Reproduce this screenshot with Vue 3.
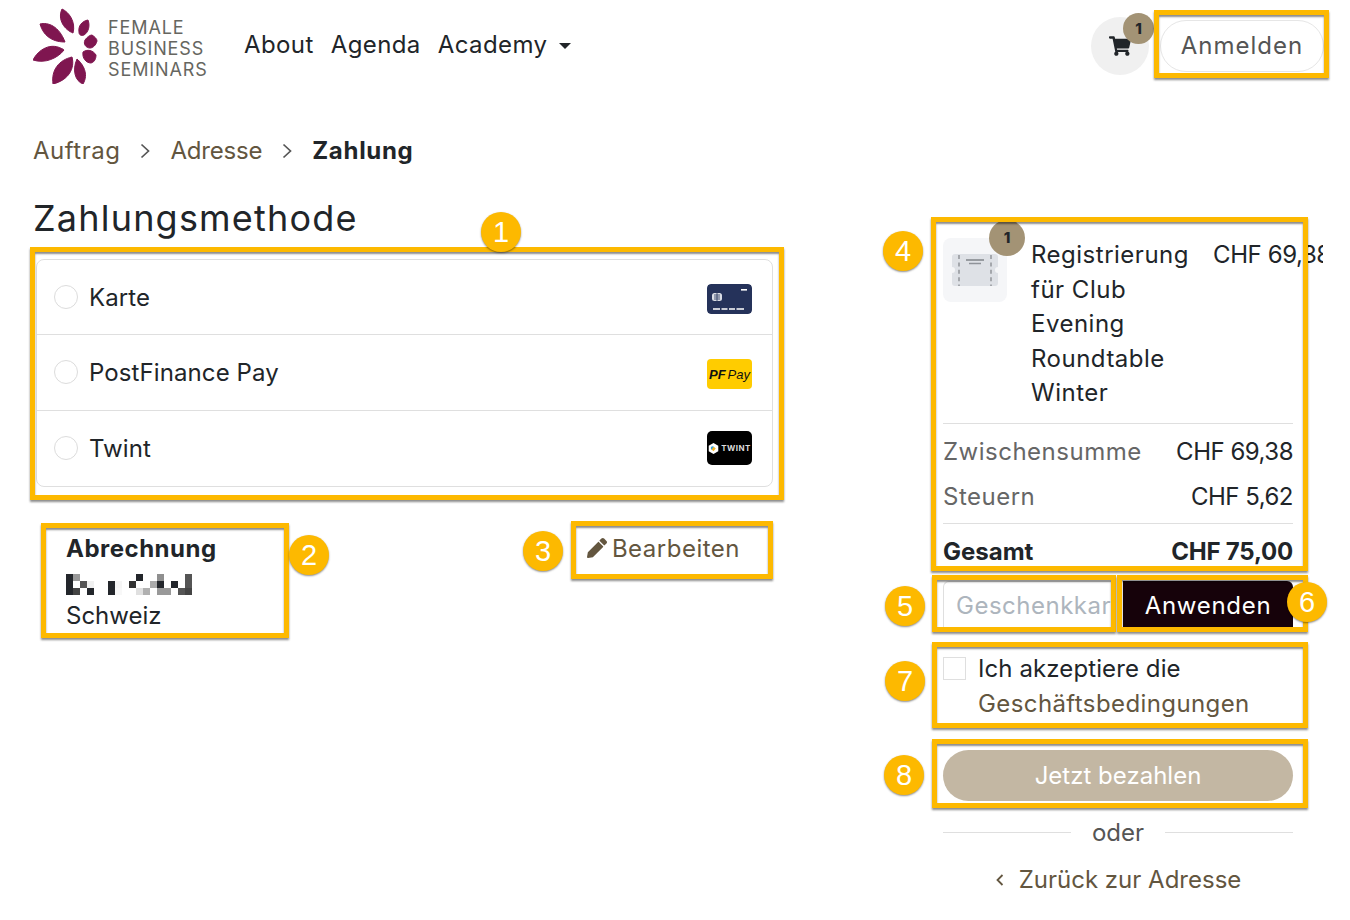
<template>
  <div class="page">
    <header class="topbar">
      <div class="brand">
        <svg class="logo" viewBox="0 0 66 76" width="66" height="76">
          <g fill="#7f1650" stroke="#7f1650" stroke-width="1" stroke-linejoin="round">
            <path v-for="p in petals" :key="p" :d="p" />
          </g>
        </svg>
        <div class="brand-name">FEMALE<br />BUSINESS<br />SEMINARS</div>
      </div>
      <nav class="nav">
        <a>About</a>
        <a>Agenda</a>
        <a class="dropdown">Academy</a>
      </nav>
      <div class="actions">
        <div class="cart">
          <svg viewBox="0 0 576 512" width="22" height="20">
            <path fill="#212529" d="M528 301l47-208c3-15-8-29-24-29H159l-9-45C148 8 138 0 126 0H24C11 0 0 11 0 24v16c0 13 11 24 24 24h70l70 343c-17 10-28 28-28 49 0 31 25 56 56 56s56-25 56-56c0-16-6-30-17-40h210c-11 10-17 24-17 40 0 31 25 56 56 56s56-25 56-56c0-22-13-41-32-50l6-24c3-15-8-29-24-29H212l-7-32h299c11 0 21-8 24-19z" />
          </svg>
          <span class="count">1</span>
        </div>
        <button class="login">Anmelden</button>
      </div>
    </header>

    <ol class="crumbs">
      <li>Auftrag</li>
      <li class="sep"><svg viewBox="0 0 10 16" width="10" height="16"><path d="M1.5 1.5L8.5 8l-7 6.500" fill="none" stroke="#555" stroke-width="1.7" /></svg></li>
      <li class="tight">Adresse</li>
      <li class="sep"><svg viewBox="0 0 10 16" width="10" height="16"><path d="M1.5 1.5L8.5 8l-7 6.500" fill="none" stroke="#555" stroke-width="1.7" /></svg></li>
      <li class="current">Zahlung</li>
    </ol>

    <main class="checkout">
      <section class="left">
        <h1>Zahlungsmethode</h1>
        <div class="methods">
          <label v-for="m in methods" :key="m.name" class="method">
            <span class="radio"></span>
            <span class="method-name">{{ m.name }}</span>
            <svg v-if="m.icon === 'card'" class="pay-icon card" viewBox="0 0 45 30">
              <rect width="45" height="30" rx="4" fill="#25325a" />
              <rect x="34" y="5" width="6" height="1.600" fill="#fff" />
              <rect x="5" y="9" width="10" height="8" rx="2.500" fill="#d9dce4" />
              <path d="M7 11h6M7 13h6M7 15h6M10 9v8" stroke="#25325a" stroke-width=".8" />
              <path d="M6 25h7M14.500 25h6M22 25h6M29.500 25h7.500" stroke="#fff" stroke-width="1.600" />
            </svg>
            <span v-else-if="m.icon === 'pf'" class="pay-icon pf"><b>PF</b><span>Pay</span></span>
            <span v-else class="twint">
              <svg viewBox="0 0 12 12" width="11" height="11">
                <path d="M6 0l5.200 3v6L6 12 .8 9V3z" fill="#fff" />
                <circle cx="5" cy="5.500" r="2" fill="#2f9fd8" />
                <path d="M6 4l2.500 2L6 9 4 7z" fill="#f5b324" />
              </svg>
              <span>TWINT</span>
            </span>
          </label>
        </div>

        <div class="billing-row">
          <div class="billing">
            <strong>Abrechnung</strong>
            <div class="blurred">
              <i v-for="(c, i) in blurCells" :key="i" :style="{ background: c }"></i>
            </div>
            <div>Schweiz</div>
          </div>
          <a class="edit">
            <svg viewBox="0 0 512 512" width="20" height="20">
              <path fill="#63563f" d="M497.900 142.100l-46.100 46.100c-4.700 4.700-12.300 4.700-17 0l-111-111c-4.700-4.700-4.700-12.300 0-17l46.100-46.100c18.700-18.700 49.100-18.700 67.900 0l60.100 60.100c18.800 18.700 18.800 49.100 0 67.900zM284.200 99.800L21.600 362.400.4 483.900c-2.900 16.400 11.400 30.600 27.800 27.800l121.500-21.300 262.600-262.600c4.700-4.700 4.700-12.300 0-17l-111-111c-4.800-4.700-12.400-4.700-17.100 0z" />
            </svg>
            Bearbeiten
          </a>
        </div>
      </section>

      <aside class="summary">
        <div class="item">
          <div class="thumb">
            <svg viewBox="0 0 64 64" width="64" height="64">
              <path fill="#dee1e6" d="M12 16h40a3 3 0 0 1 3 3v10a3 3 0 0 0 0 6v10a3 3 0 0 1-3 3H12a3 3 0 0 1-3-3V35a3 3 0 0 0 0-6V19a3 3 0 0 1 3-3z" />
              <path d="M16 17v31M48 17v31" stroke="#a4a7ac" stroke-width="2" stroke-dasharray="4 3.400" />
              <path d="M23 22h18" stroke="#7f8389" stroke-width="1.500" />
              <path d="M26 25.500h12" stroke="#8f9399" stroke-width="1.500" />
            </svg>
            <span class="count">1</span>
          </div>
          <div class="item-name">Registrierung für Club Evening Roundtable Winter</div>
          <div class="item-price">CHF 69,38</div>
        </div>

        <div class="totals">
          <div class="total-line"><span class="muted">Zwischensumme</span><span class="amount">CHF 69,38</span></div>
          <div class="total-line"><span class="muted">Steuern</span><span class="amount">CHF 5,62</span></div>
        </div>
        <div class="grand"><span>Gesamt</span><span class="amount-bold">CHF 75,00</span></div>

        <div class="gift">
          <input type="text" placeholder="Geschenkkarte" />
          <button>Anwenden</button>
        </div>

        <label class="terms">
          <span class="check"></span>
          <span>Ich akzeptiere die <a>Geschäftsbedingungen</a></span>
        </label>

        <button class="pay">Jetzt bezahlen</button>

        <div class="or"><span>oder</span></div>

        <a class="back">
          <svg viewBox="0 0 10 16" width="10" height="16"><path d="M7.500 3L2.500 8l5 5" fill="none" stroke="#63563f" stroke-width="1.800" /></svg>
          Zurück zur Adresse
        </a>
      </aside>
    </main>

    <!-- annotations drawn over the screenshot -->
    <div v-for="(b, i) in boxes" :key="'b' + i" class="mark" :style="boxStyle(b)"></div>
    <div v-for="c in callouts" :key="c.n" class="callout" :style="{ left: c.x - 20 + 'px', top: c.y - 20 + 'px' }">{{ c.n }}</div>
  </div>
</template>

<script setup>
const petals = [
  'M29 1C36 4 43 14 40 25C32 22 24 12 29 1Z',
  'M7 16C15 14 26 18 32 34C22 34 11 30 7 16Z',
  'M0 52C5 42 18 33 31 42C25 50 12 56 0 52Z',
  'M20 76C18 62 26 52 39 49C42 60 36 72 20 76Z',
  'M50 76C42 73 39 62 44 51C50 56 56 66 50 76Z',
  'M50 44C54 41 60 42 63 47C63 50 62 54 58 55C53 55 49 50 50 44Z',
  'M52 32C54 29 57 27 59 27C62 29 64 31 64 33C63 37 60 40 57 40C53 40 50 36 52 32Z',
  'M46 24C45 18 49 13 55 12C57 17 56 24 51 27C48 28 46 27 46 24Z',
]

const methods = [
  { name: 'Karte', icon: 'card' },
  { name: 'PostFinance Pay', icon: 'pf' },
  { name: 'Twint', icon: 'twint' },
]

const d = '#23262b'
const w = '#ffffff'
const blurCells = [
  d, '#999', w, w, w, w, w, w, w, w, d, w, w, '#8f8f8f', w, w, w, '#555',
  d, w, '#555', '#f0f0f0', w, w, d, '#f5f5f5', w, '#333', w, w, '#aaa', d, w, d, w, '#555',
  d, '#444', w, d, w, w, d, '#f8f8f8', w, w, '#e0e0e0', '#b0b0b0', w, '#999', '#999', w, '#555', '#444',
]

const boxes = [
  [30, 247, 754, 253],
  [41, 523, 248, 115],
  [571, 521, 202, 58],
  [931, 217, 377, 354],
  [932, 575, 184, 57],
  [1117, 575, 191, 57],
  [932, 642, 376, 86],
  [932, 739, 376, 69],
  [1154, 10, 175, 68],
]

const callouts = [
  { n: 1, x: 501, y: 232 },
  { n: 2, x: 309, y: 555 },
  { n: 3, x: 543, y: 551 },
  { n: 4, x: 903, y: 251 },
  { n: 5, x: 905, y: 606 },
  { n: 6, x: 1307, y: 602 },
  { n: 7, x: 905, y: 681 },
  { n: 8, x: 904, y: 775 },
]

const boxStyle = ([x, y, width, height]) => ({
  left: x + 'px',
  top: y + 'px',
  width: width + 'px',
  height: height + 'px',
})
</script>

<style>
body {
  background: #fff;
  overflow-x: hidden;
}
</style>

<style scoped>
.page {
  position: relative;
  width: 1350px;
  height: 920px;
  overflow: hidden;
  font-family: Inter, "Open Sans", sans-serif;
  font-size: 24px;
  color: #212529;
  background: #fff;
}

.topbar {
  display: flex;
  align-items: flex-start;
  height: 90px;
  padding: 8px 26px 0 33px;
  box-sizing: border-box;
}

.brand {
  display: flex;
  gap: 9px;
  width: 211px;
}

.brand-name {
  margin-top: 9px;
  font-size: 18px;
  line-height: 21px;
  letter-spacing: .9px;
  color: #666660;
}

.nav {
  display: flex;
  gap: 17px;
  margin-top: 21px;
  line-height: 32px;
  letter-spacing: .4px;
}

.dropdown::after {
  content: "";
  display: inline-block;
  margin-left: 12px;
  vertical-align: 4px;
  border-top: 6px solid #212529;
  border-left: 6px solid transparent;
  border-right: 6px solid transparent;
}

.actions {
  display: flex;
  gap: 11px;
  margin-left: auto;
  margin-top: 9px;
}

.cart {
  position: relative;
  display: flex;
  align-items: center;
  justify-content: center;
  width: 58px;
  height: 58px;
  border-radius: 50%;
  background: #f0f0f0;
}

.count {
  position: absolute;
  top: -4px;
  right: -5px;
  width: 31px;
  height: 31px;
  border-radius: 50%;
  background: #a39375;
  color: #212529;
  font-size: 15px;
  font-weight: 800;
  line-height: 31px;
  text-align: center;
}

.login {
  width: 164px;
  height: 52px;
  margin-top: 3px;
  padding: 0 0 2px;
  border: 1px solid #e6e6e6;
  border-radius: 26px;
  background: #fff;
  color: #555;
  font: inherit;
  font-size: 24px;
  letter-spacing: 1px;
}

.crumbs {
  display: flex;
  align-items: center;
  gap: 20px;
  margin: 0;
  padding: 45px 33px 0;
  list-style: none;
  line-height: 32px;
  letter-spacing: .5px;
  color: #63563f;
}

.tight {
  letter-spacing: -.2px;
}

.sep {
  display: flex;
}

.current {
  font-weight: 700;
  letter-spacing: .7px;
  color: #212529;
}

.checkout {
  display: flex;
  gap: 170px;
  padding: 0 33px;
}

.left {
  width: 740px;
}

h1 {
  margin: 30px 0 0;
  font-size: 36px;
  font-weight: 400;
  line-height: 42px;
  letter-spacing: 1.2px;
}

.methods {
  margin: 20px 0 0 3px;
  border: 1px solid #dfdfdf;
  border-radius: 8px;
}

.method {
  display: flex;
  align-items: center;
  height: 75.3px;
  padding: 0 20px 0 17px;
  border-bottom: 1px solid #dfdfdf;
  box-sizing: border-box;
}

.method:last-child {
  border-bottom: 0;
}

.radio {
  width: 22px;
  height: 22px;
  margin-right: 11px;
  border: 1px solid #dcdcdc;
  border-radius: 50%;
}

.method-name {
  flex: 1;
  letter-spacing: .1px;
}

.pay-icon {
  display: block;
  width: 45px;
  height: 30px;
  margin-top: 4px;
  border-radius: 4px;
}

.pf {
  display: flex;
  align-items: center;
  justify-content: center;
  gap: 2px;
  background: #ffcc00;
  color: #111;
  font-family: "Liberation Sans", sans-serif;
  font-size: 13px;
  font-style: italic;
}

.twint {
  display: flex;
  align-items: center;
  justify-content: center;
  gap: 2px;
  width: 45px;
  height: 34px;
  border-radius: 5px;
  background: #000;
  color: #ddd;
  font-size: 8px;
  font-weight: 700;
  letter-spacing: .4px;
}

.billing-row {
  display: flex;
  justify-content: space-between;
  margin-top: 45px;
  padding-left: 33px;
}

.billing {
  line-height: 33px;
}

.billing strong {
  letter-spacing: .5px;
}

.blurred {
  display: grid;
  grid-template-columns: repeat(18, 7px);
  grid-auto-rows: 7px;
  margin: 9px 0 4px;
}

.edit {
  display: flex;
  align-items: center;
  gap: 5px;
  height: 33px;
  margin-right: 33px;
  letter-spacing: .5px;
  color: #63563f;
}

.summary {
  width: 350px;
  margin-top: 71px;
}

.item {
  display: flex;
  position: relative;
  padding-bottom: 12px;
  border-bottom: 1px solid #dfdfdf;
}

.thumb {
  position: relative;
  flex: none;
  width: 64px;
  height: 64px;
  border-radius: 8px;
  background: #f5f6f8;
}

.thumb .count {
  top: -18px;
  right: -18px;
  width: 36px;
  height: 36px;
  line-height: 36px;
}

.item-name {
  flex: none;
  width: 170px;
  margin-left: 24px;
  line-height: 34.6px;
  letter-spacing: .5px;
}

.item-price {
  flex: none;
  width: 110px;
  margin-left: 12px;
  overflow: hidden;
  white-space: nowrap;
  line-height: 34.6px;
  letter-spacing: -.4px;
}

.totals {
  padding: 5px 0 4px;
  border-bottom: 1px solid #dfdfdf;
}

.total-line,
.grand {
  display: flex;
  justify-content: space-between;
  line-height: 45px;
}

.muted {
  color: #666;
  letter-spacing: .5px;
}

.amount {
  letter-spacing: -.5px;
}

.amount-bold {
  letter-spacing: -.2px;
}

.grand {
  font-weight: 700;
  margin-top: 5px;
}

.gift {
  display: flex;
  gap: 10px;
  margin-top: 7px;
}

.gift input {
  width: 170px;
  height: 50px;
  padding: 0 0 0 12px;
  border: 1px solid #dfdfdf;
  border-right: 0;
  border-radius: 6px 0 0 0;
  box-sizing: border-box;
  font: inherit;
  letter-spacing: .5px;
  outline: none;
}

.gift input::placeholder {
  color: #adb5bd;
}

.gift button {
  flex: 1;
  height: 50px;
  border: 0;
  border-radius: 0 6px 0 0;
  background: #16020a;
  color: #fff;
  font: inherit;
  letter-spacing: .7px;
}

.terms {
  display: flex;
  gap: 12px;
  margin-top: 20px;
  line-height: 35px;
  letter-spacing: .1px;
}

.check {
  flex: none;
  width: 21px;
  height: 21px;
  margin-top: 6px;
  border: 1px solid #dfdfdf;
}

.terms a {
  letter-spacing: .4px;
  color: #63563f;
}

.pay {
  display: block;
  width: 100%;
  height: 51px;
  margin-top: 29px;
  border: 0;
  border-radius: 26px;
  background: #c3b7a3;
  color: #fff;
  font: inherit;
}

.or {
  display: flex;
  align-items: center;
  gap: 21px;
  margin-top: 16px;
  line-height: 32px;
  color: #555;
}

.or span {
  flex: none;
}

.or::before,
.or::after {
  content: "";
  flex: 1;
  height: 1px;
  background: #dfdfdf;
}

.back {
  display: flex;
  align-items: center;
  justify-content: center;
  gap: 14px;
  margin-top: 15px;
  line-height: 32px;
  color: #63563f;
}

.mark {
  position: absolute;
  box-sizing: border-box;
  border: 5px solid #fdb900;
  box-shadow: 0 2px 2px rgba(0, 0, 0, .45), inset 0 2px 2px rgba(0, 0, 0, .45);
  pointer-events: none;
}

.callout {
  position: absolute;
  width: 40px;
  height: 40px;
  border-radius: 50%;
  background: #fdb900;
  box-shadow: 0 1px 2px rgba(0, 0, 0, .45);
  color: #fff;
  font-family: "Liberation Sans", sans-serif;
  font-size: 29px;
  line-height: 40px;
  text-align: center;
}
</style>
